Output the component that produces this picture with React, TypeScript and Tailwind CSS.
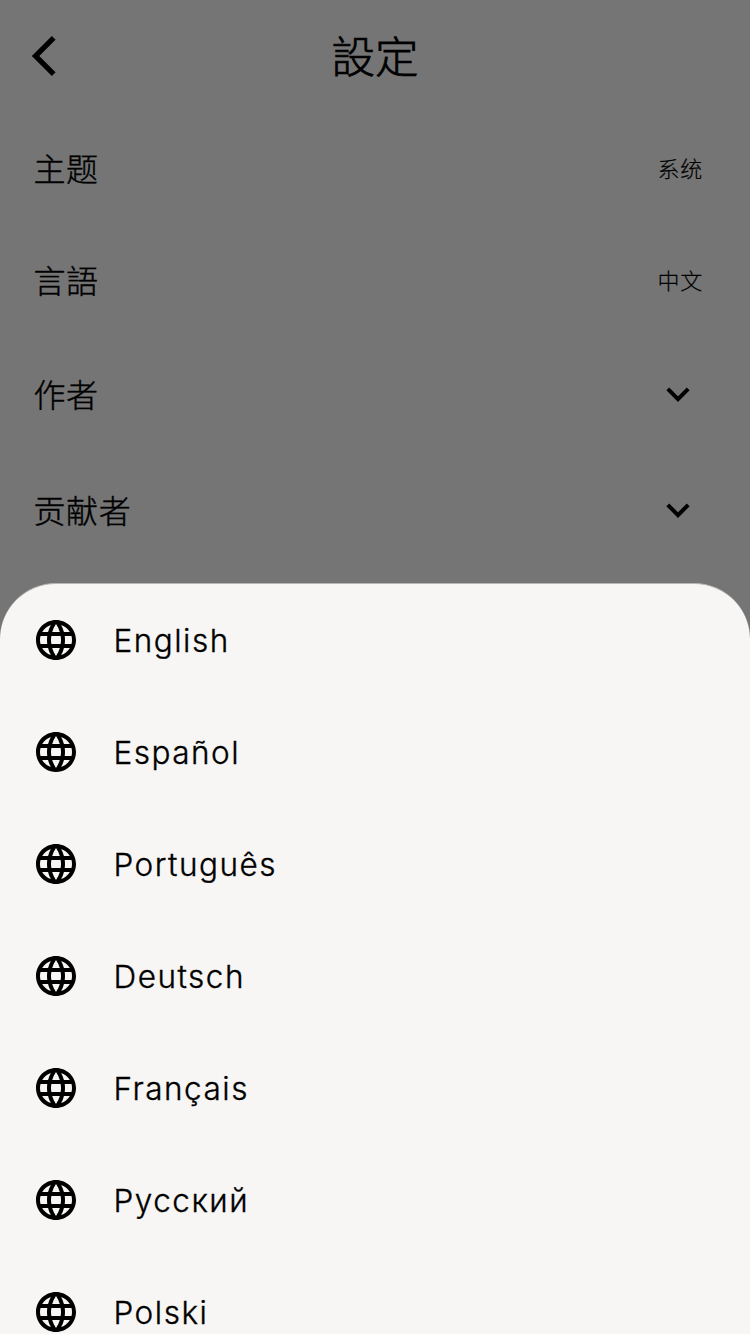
import type { ReactNode } from "react";
import { MdLanguage } from "react-icons/md";

const languages = ["English", "Español", "Português", "Deutsch", "Français", "Русский", "Polski"];

function BackIcon() {
  return (
    <svg className="ml-8 h-12 w-12" viewBox="0 0 24 24" fill="currentColor" stroke="currentColor" strokeWidth="0.2">
      <path d="M11.670 3.870L9.900 2.100 0 12l9.900 9.900 1.770-1.770L3.540 12z" />
    </svg>
  );
}

function ChevronDown() {
  return (
    <svg className="mr-3 h-6 w-6" viewBox="0 0 24 24" fill="none" stroke="currentColor" strokeWidth="4">
      <path d="M1.800 6.900L12 17.100 22.200 6.900" />
    </svg>
  );
}

function Row({ label, tall, children }: { label: string; tall?: boolean; children: ReactNode }) {
  return (
    <div className={`flex items-center justify-between pr-12 pl-[33.5px] ${tall ? "h-[116px]" : "h-28"}`}>
      <span className="-mt-[3px] text-[32px] font-light tracking-[0.6px] [-webkit-text-stroke:0.4px_black]">{label}</span>
      {children}
    </div>
  );
}

function Value({ children }: { children: ReactNode }) {
  return (
    <span className="-mt-0.5 -mr-px text-[22px] font-light tracking-[0.8px] [-webkit-text-stroke:0.2px_black]">{children}</span>
  );
}

export default function App() {
  return (
    <div className="flex h-[1334px] w-[750px] flex-col overflow-hidden bg-[#757575] font-['Noto_Sans_CJK_SC','Noto_Sans_CJK_JP',sans-serif] text-black">
      <header className="grid h-28 grid-cols-3 items-center">
        <BackIcon />
        <h1 className="-mt-[3px] text-center text-[43.500px] font-light [-webkit-text-stroke:0.7px_black]">設定</h1>
      </header>
      <main className="flex h-[472px] flex-col">
        <Row label="主题"><Value>系统</Value></Row>
        <Row label="言語"><Value>中文</Value></Row>
        <Row label="作者" tall><ChevronDown /></Row>
        <Row label="贡献者" tall><ChevronDown /></Row>
      </main>
      <section className="-mt-px h-[751px] shrink-0 rounded-t-[56px] border-t border-[#b6b5b5] bg-[#f7f6f4]">
        {languages.map((name) => (
          <div key={name} className="flex h-28 items-center gap-[33.500px] pl-8 font-['Inter',sans-serif] text-[31.500px] font-light tracking-[1.500px]">
            <MdLanguage className="h-12 w-12 shrink-0" />
            <span className="mt-0.5 [-webkit-text-stroke:0.35px_black]">{name}</span>
          </div>
        ))}
      </section>
    </div>
  );
}
